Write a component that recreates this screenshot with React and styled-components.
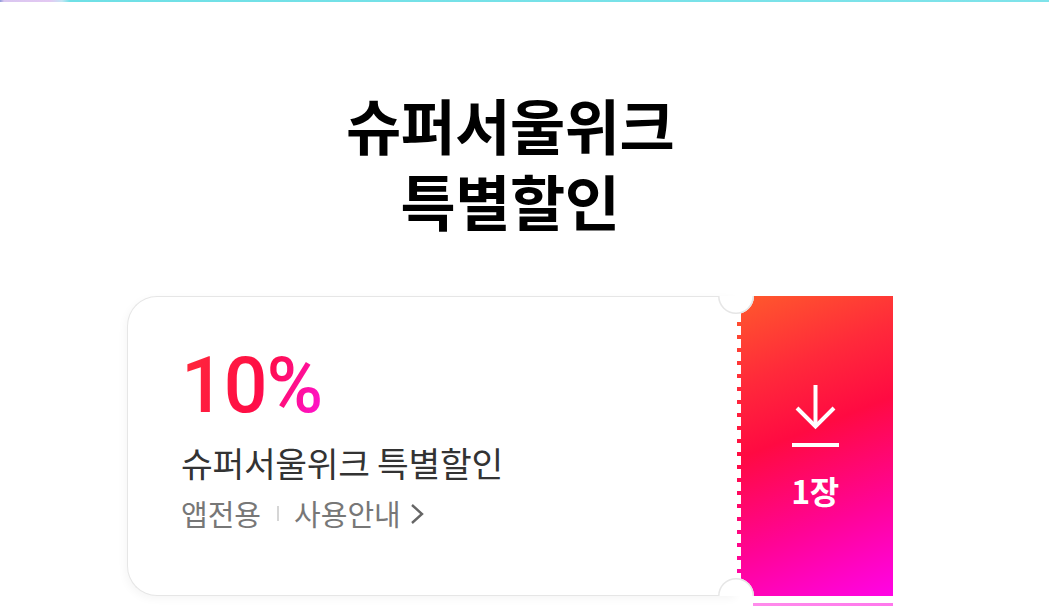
import React from "react";
import styled, { createGlobalStyle } from "styled-components";

const Global = createGlobalStyle`
  html, body { margin: 0; padding: 0; background: #fff; overflow: hidden; }
  body { font-family: "Noto Sans CJK KR", "Noto Sans", sans-serif; }
`;

const Page = styled.div`
  width: 1049px;
  height: 607px;
  display: flex;
  flex-direction: column;
  overflow: hidden;
`;

const TopLine = styled.div`
  height: 2px;
  background: linear-gradient(90deg, #8f9bd8 0px, #d9c6f0 4px, #e3c8f2 50px, #c3e6f4 62px, #6fe0e6 70px, #7fe3ea 100%);
`;

const Main = styled.main`
  width: 1020px;
  display: flex;
  flex-direction: column;
  align-items: center;
`;

const Title = styled.h1`
  margin: 84px 0 0;
  display: flex;
  flex-direction: column;
  align-items: center;
  font-family: "Noto Sans CJK KR", sans-serif;
  font-weight: 700;
  font-size: 60px;
  color: #000;
  letter-spacing: -0.5px;
`;

const TitleLine = styled.span`
  display: block;
  height: 76px;
  line-height: 76px;
`;

const Card = styled.div`
  position: relative;
  margin-top: 58px;
  width: 766px;
  height: 300px;
  display: flex;
`;

const Body = styled.div`
  flex: 1;
  box-sizing: border-box;
  background: #fff;
  border: 1.5px solid #e6e6e6;
  border-right: none;
  border-radius: 30px 0 0 30px;
  box-shadow: -2px 3px 8px rgba(0, 0, 0, 0.04);
  padding: 44px 0 0 53px;
  display: flex;
  flex-direction: column;
`;

const Rate = styled.div`
  font-family: Roboto, "Noto Sans", sans-serif;
  font-weight: 500;
  font-size: 77px;
  line-height: 90px;
  letter-spacing: -1px;
  background: linear-gradient(110deg, #ff2a3a 0%, #ff0d45 55%, #ff10b0 85%, #ff16d6 100%);
  -webkit-background-clip: text;
  background-clip: text;
  color: transparent;
  width: max-content;
`;

const Name = styled.div`
  margin-top: 10px;
  font-size: 34.5px;
  line-height: 42px;
  color: #333;
  letter-spacing: -0.3px;
`;

const Meta = styled.div`
  margin-top: 12px;
  display: flex;
  align-items: center;
  font-size: 29px;
  line-height: 36px;
  color: #777;
`;

const Sep = styled.span`
  width: 2px;
  height: 15px;
  background: #d6d6d6;
  margin: 0 15px 0 16px;
`;

const Chevron = styled.svg`
  margin-left: 8px;
  margin-top: 2px;
`;

const Stub = styled.div`
  position: relative;
  width: 156px;
  background: linear-gradient(158deg, #ff5a2c 0%, #ff2a3a 25%, #ff0a42 45%, #ff0494 72%, #ff04e6 100%);
  display: flex;
  flex-direction: column;
  align-items: center;
  justify-content: center;
  gap: 26px;
  color: #fff;
  &::before {
    content: "";
    position: absolute;
    left: -1px;
    top: 17px;
    bottom: 17px;
    width: 5px;
    background: repeating-linear-gradient(180deg, #fff 0 9px, transparent 9px 13px);
  }
`;

const Count = styled.div`
  font-weight: 700;
  font-size: 32px;
  line-height: 34px;
  letter-spacing: -0.5px;
`;

const Notch = styled.div`
  position: absolute;
  left: 591px;
  ${(p) => (p.$bottom ? "bottom: -18px;" : "top: -18px;")}
  width: 36px;
  height: 36px;
  border-radius: 50%;
  background: #fff;
  box-shadow: inset 0 0 0 1.5px #e6e6e6;
  clip-path: ${(p) => (p.$bottom ? "inset(0 0 50% 0)" : "inset(50% 0 0 0)")};
`;

const NextStrip = styled.div`
  margin-top: 7px;
  margin-left: 626px;
  width: 140px;
  height: 3px;
  background: linear-gradient(90deg, #ff6fe6, #ff55e8);
  opacity: 0.8;
`;

export default function App() {
  return (
    <Page>
      <Global />
      <TopLine />
      <Main>
        <Title>
          <TitleLine>슈퍼서울위크</TitleLine>
          <TitleLine>특별할인</TitleLine>
        </Title>
        <Card>
          <Body>
            <Rate>10%</Rate>
            <Name>슈퍼서울위크 특별할인</Name>
            <Meta>
              앱전용
              <Sep />
              사용안내
              <Chevron width="16" height="24" viewBox="0 0 16 24">
                <polyline points="3,3 13,12 3,21" fill="none" stroke="#666" strokeWidth="2.4" />
              </Chevron>
            </Meta>
          </Body>
          <Stub>
            <svg width="47" height="62" viewBox="0 0 47 62">
              <g stroke="#fff" strokeWidth="4" fill="none">
                <line x1="23.5" y1="0" x2="23.5" y2="41" />
                <polyline points="5,23 23.5,41.5 42,23" />
                <line x1="0" y1="60" x2="47" y2="60" />
              </g>
            </svg>
            <Count>1장</Count>
          </Stub>
          <Notch />
          <Notch $bottom />
        </Card>
        <NextStrip />
      </Main>
    </Page>
  );
}
